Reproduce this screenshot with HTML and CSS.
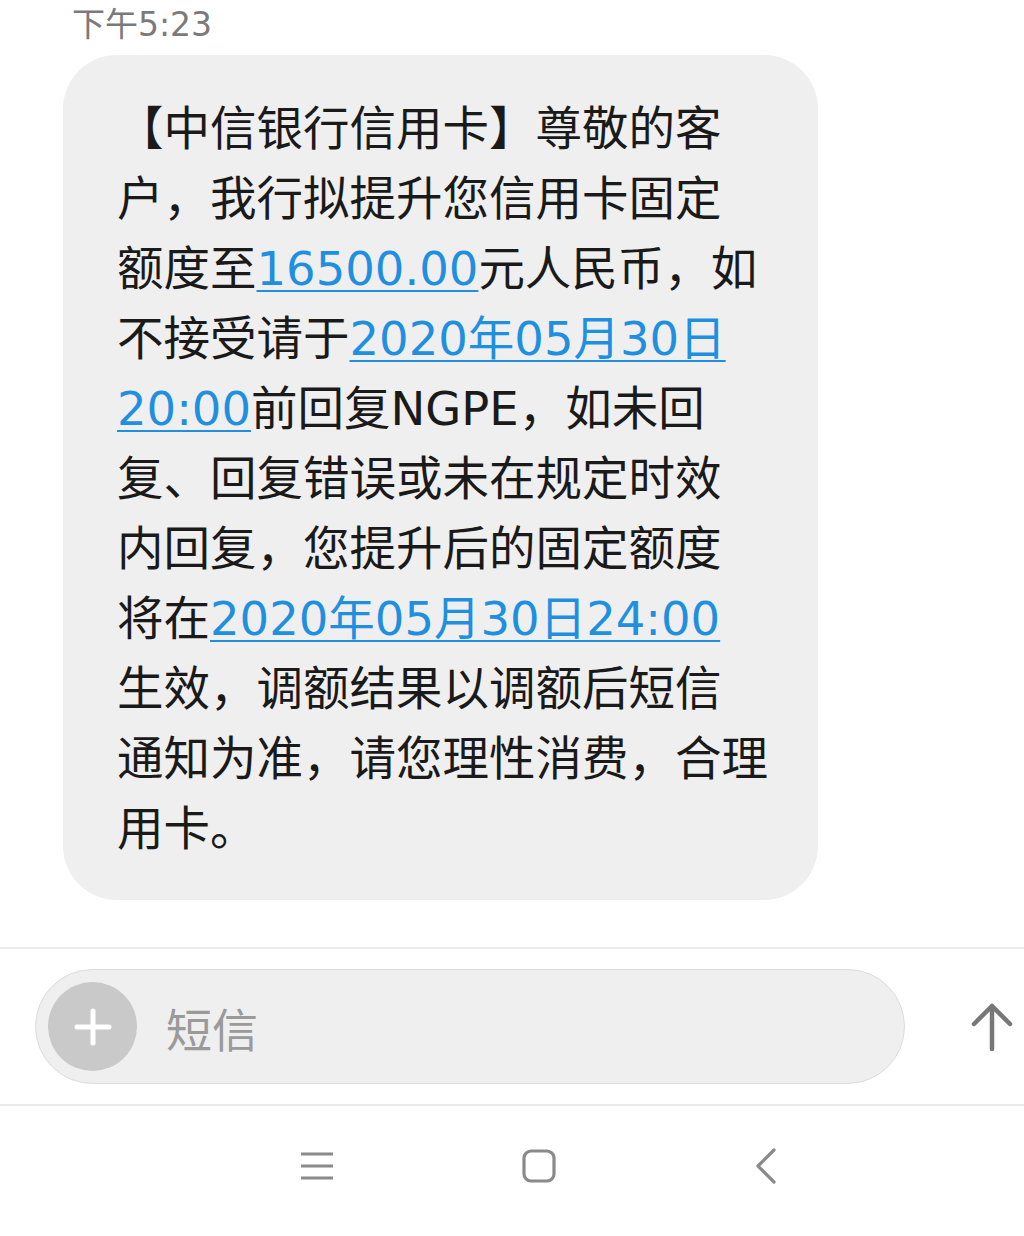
FILE: index.html
```html
<!DOCTYPE html>
<html lang="zh-CN">
<head>
    <meta charset="utf-8">
    <link rel="stylesheet" href="styles.css">
    <title>短信</title>
</head>
<body>
    <div class="thread">
        <div class="time">下午5:23</div>
        <div class="bubble">
            <p class="msg">【中信银行信用卡】尊敬的客<br>户，我行拟提升您信用卡固定<br>额度至<a class="link">16500.00</a>元人民币，如<br>不接受请于<a class="link">2020年05月30日<br>20:00</a>前回复NGPE，如未回<br>复、回复错误或未在规定时效<br>内回复，您提升后的固定额度<br>将在<a class="link">2020年05月30日24:00</a><br>生效，调额结果以调额后短信<br>通知为准，请您理性消费，合理<br>用卡。</p>
        </div>
    </div>

    <div class="composer">
        <div class="input-pill">
            <div class="plus-btn">
                <svg width="40" height="40" viewBox="0 0 40 40">
                    <path d="M20 4 V36 M4 20 H36" stroke="#fff" stroke-width="5" stroke-linecap="round" fill="none"/>
                </svg>
            </div>
            <span class="placeholder">短信</span>
        </div>
        <div class="send-btn">
            <svg width="44" height="50" viewBox="0 0 44 50">
                <path d="M22 47 V4 M4 22 L22 4 L40 22" stroke="#777" stroke-width="4.5" stroke-linecap="round" stroke-linejoin="round" fill="none"/>
            </svg>
        </div>
    </div>

    <div class="navbar">
        <svg class="nav-menu" width="36" height="30" viewBox="0 0 36 30">
            <path d="M2 3 H34 M2 15 H34 M2 27 H34" stroke="#8a8a8a" stroke-width="3" fill="none"/>
        </svg>
        <svg class="nav-home" width="36" height="36" viewBox="0 0 36 36">
            <rect x="3" y="3" width="30" height="30" rx="7" stroke="#8a8a8a" stroke-width="3.2" fill="none"/>
        </svg>
        <svg class="nav-back" width="24" height="36" viewBox="0 0 24 36">
            <path d="M20 2 L4 18 L20 34" stroke="#8a8a8a" stroke-width="3.2" stroke-linecap="round" stroke-linejoin="round" fill="none"/>
        </svg>
    </div>
</body>
</html>
```

FILE: styles.css
```css
* {
    margin: 0;
    padding: 0;
    box-sizing: border-box;
}

body {
    width: 1024px;
    height: 1236px;
    background-color: #ffffff;
    font-family: "DejaVu Sans", "Noto Sans CJK SC", sans-serif;
    overflow: hidden;
}

.thread {
    height: 947px;
    padding-left: 63px;
}

.time {
    height: 55px;
    padding-left: 9px;
    font-size: 33px;
    line-height: 50px;
    color: #7a7a7a;
}

.bubble {
    width: 755px;
    background-color: #efefef;
    border-radius: 54px;
    padding: 39px 20px 36px 54px;
}

.msg {
    font-size: 46.5px;
    line-height: 70px;
    color: #1a1a1a;
    white-space: nowrap;
}

.link {
    color: #1f8fe0;
    text-decoration: underline;
    text-decoration-thickness: 2px;
    text-underline-offset: 5px;
}

.composer {
    height: 159px;
    border-top: 2px solid #ebebeb;
    border-bottom: 2px solid #ebebeb;
    display: flex;
    align-items: center;
    padding-left: 35px;
}

.input-pill {
    width: 870px;
    height: 115px;
    border-radius: 58px;
    background-color: #efefef;
    border: 1.5px solid #dcdcdc;
    display: flex;
    align-items: center;
    padding-left: 12px;
}

.plus-btn {
    width: 89px;
    height: 89px;
    border-radius: 50%;
    background-color: #c9c9c9;
    display: flex;
    align-items: center;
    justify-content: center;
}

.placeholder {
    margin-left: 29px;
    font-size: 46px;
    color: #9a9a9a;
}

.send-btn {
    margin-left: 65px;
    display: flex;
    align-items: center;
}

.navbar {
    height: 128px;
    display: flex;
    align-items: center;
    padding: 0 0 8px 299px;
}

.nav-home {
    margin-left: 186px;
}

.nav-back {
    margin-left: 197px;
}
```
